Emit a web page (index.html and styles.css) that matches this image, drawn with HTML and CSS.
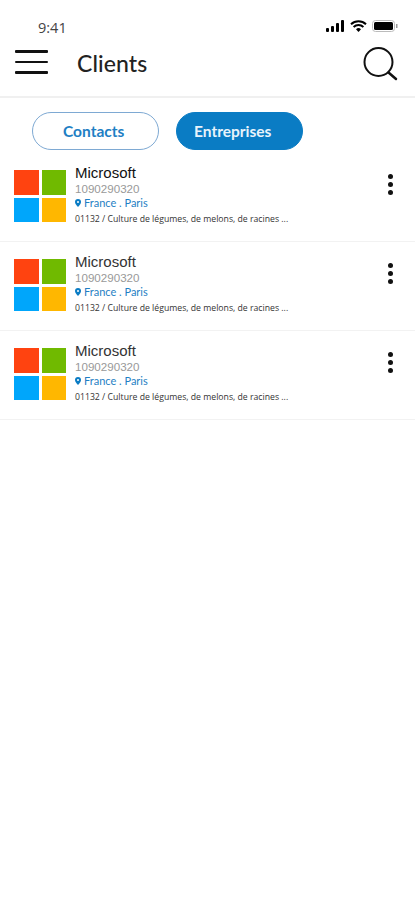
FILE: index.html
```html
<!DOCTYPE html>
<html lang="fr">
<head>
  <meta charset="UTF-8">
  <meta name="viewport" content="width=device-width, initial-scale=1.0">
  <title>Clients</title>
  <link rel="stylesheet" href="styles.css">
</head>
<body>
  <div class="status-bar">
    <span class="time">9:41</span>
    <div class="status-icons">
      <svg width="19" height="12" viewBox="0 0 19 12"><rect x="0" y="8" width="3" height="4" rx="1"/><rect x="5" y="6" width="3" height="6" rx="1"/><rect x="10" y="3" width="3" height="9" rx="1"/><rect x="15" y="0" width="3" height="12" rx="1"/></svg>
      <svg width="17" height="12" viewBox="0 0 17 12"><path d="M1 4.2a11 11 0 0 1 15 0M3.6 6.9a7.2 7.2 0 0 1 9.8 0" fill="none" stroke="#000" stroke-width="2"/><path d="M6 9.2a3.6 3.6 0 0 1 5 0L8.500 12z"/></svg>
      <svg width="26" height="12" viewBox="0 0 26 12"><rect x="0.500" y="0.500" width="22" height="11" rx="3" fill="none" stroke="#bbb"/><rect x="2" y="2" width="19" height="8" rx="1.500"/><rect x="24" y="4" width="1.500" height="4" fill="#999"/></svg>
    </div>
  </div>

  <header class="top-bar">
    <div class="menu-icon"><span></span><span></span><span></span></div>
    <h1>Clients</h1>
    <svg class="search-icon" width="36" height="36" viewBox="0 0 36 36"><circle cx="15.500" cy="15" r="14" fill="none" stroke="#111" stroke-width="2"/><path d="M25.500 25.500L33 32" stroke="#111" stroke-width="2.500" stroke-linecap="round"/></svg>
  </header>

  <div class="tabs">
    <button class="tab">Contacts</button>
    <button class="tab active">Entreprises</button>
  </div>

  <ul class="client-list">
    <li class="client first">
      <div class="logo"><i class="red"></i><i class="green"></i><i class="blue"></i><i class="yellow"></i></div>
      <div class="infos">
        <div class="name">Microsoft</div>
        <div class="code">1090290320</div>
        <div class="place"><svg width="6" height="8" viewBox="0 0 6 8"><path d="M3 0a3 3 0 0 1 3 3c0 2-3 5-3 5S0 5 0 3a3 3 0 0 1 3-3z" fill="#0a7cc4"/><circle cx="3" cy="3" r="1" fill="#fff"/></svg>France . Paris</div>
        <div class="activity">01132 / Culture de légumes, de melons, de racines ...</div>
      </div>
      <div class="dots"><span></span><span></span><span></span></div>
    </li>
    <li class="client">
      <div class="logo"><i class="red"></i><i class="green"></i><i class="blue"></i><i class="yellow"></i></div>
      <div class="infos">
        <div class="name">Microsoft</div>
        <div class="code">1090290320</div>
        <div class="place"><svg width="6" height="8" viewBox="0 0 6 8"><path d="M3 0a3 3 0 0 1 3 3c0 2-3 5-3 5S0 5 0 3a3 3 0 0 1 3-3z" fill="#0a7cc4"/><circle cx="3" cy="3" r="1" fill="#fff"/></svg>France . Paris</div>
        <div class="activity">01132 / Culture de légumes, de melons, de racines ...</div>
      </div>
      <div class="dots"><span></span><span></span><span></span></div>
    </li>
    <li class="client">
      <div class="logo"><i class="red"></i><i class="green"></i><i class="blue"></i><i class="yellow"></i></div>
      <div class="infos">
        <div class="name">Microsoft</div>
        <div class="code">1090290320</div>
        <div class="place"><svg width="6" height="8" viewBox="0 0 6 8"><path d="M3 0a3 3 0 0 1 3 3c0 2-3 5-3 5S0 5 0 3a3 3 0 0 1 3-3z" fill="#0a7cc4"/><circle cx="3" cy="3" r="1" fill="#fff"/></svg>France . Paris</div>
        <div class="activity">01132 / Culture de légumes, de melons, de racines ...</div>
      </div>
      <div class="dots"><span></span><span></span><span></span></div>
    </li>
  </ul>
</body>
</html>
```

FILE: styles.css
```css
* {
  margin: 0;
  padding: 0;
  box-sizing: border-box;
}

body {
  background-color: white;
  font-family: Lato, "Open Sans", sans-serif;
  color: #222;
  min-height: 900px;
}

.status-bar {
  height: 40px;
  padding: 20px 17px 0 38px;
  display: flex;
  justify-content: space-between;
  align-items: flex-start;
}

.time {
  font-family: "Open Sans", sans-serif;
  font-size: 14.500px;
  line-height: 15px;
  color: #444;
}

.status-icons {
  display: flex;
  align-items: center;
  gap: 5px;
}

.status-icons svg {
  display: block;
}

.top-bar {
  height: 58px;
  padding: 0 16px 0 15px;
  display: flex;
  align-items: flex-start;
  border-bottom: 2px solid #f0f0f0;
}

.menu-icon {
  width: 33px;
  margin-top: 10px;
  display: flex;
  flex-direction: column;
  gap: 8px;
}

.menu-icon span {
  height: 2.500px;
  background-color: #111;
  border-radius: 1px;
}

h1 {
  margin: 9px 0 0 29px;
  font-size: 23px;
  line-height: 28px;
  font-weight: 500;
  letter-spacing: 0.1px;
  color: #222;
}

.search-icon {
  margin: 7px 0 0 auto;
}

.tabs {
  display: flex;
  gap: 17px;
  padding: 14px 0 0 32px;
}

.tab {
  width: 127px;
  height: 38px;
  font-family: inherit;
  font-size: 15.500px;
  font-weight: bold;
  text-align: left;
  padding-left: 30px;
  color: #1f7fc4;
  background-color: white;
  border: 1px solid #7ea9d3;
  border-radius: 19px;
}

.tab.active {
  padding-left: 17px;
  color: #e8f3fb;
  background-color: #0a7cc4;
  border-color: #0a7cc4;
}

.client-list {
  list-style: none;
}

.client {
  height: 89px;
  padding: 17px 0 0 14px;
  display: flex;
  align-items: flex-start;
  border-bottom: 1px solid #f2f2f2;
}

.client.first {
  height: 92px;
  padding-top: 20px;
}

.logo {
  width: 52px;
  height: 52px;
  flex-shrink: 0;
  display: grid;
  grid-template-columns: 1fr 1fr;
  gap: 3px;
}

.logo .red { background-color: #ff4310; }
.logo .green { background-color: #70ba00; }
.logo .blue { background-color: #00a6fb; }
.logo .yellow { background-color: #ffb700; }

.infos {
  margin: -6px 0 0 9px;
  width: 290px;
}

.name {
  font-family: "Liberation Sans", sans-serif;
  font-size: 15px;
  line-height: 18px;
  color: #333;
}

.first .name {
  color: #111;
}

.code {
  font-family: "Liberation Sans", sans-serif;
  font-size: 11.600px;
  line-height: 14px;
  color: #999;
}

.place {
  font-size: 11px;
  line-height: 14px;
  color: #1f7fc4;
  display: flex;
  align-items: center;
  gap: 3px;
}

.activity {
  margin-top: 2px;
  font-family: "Open Sans", sans-serif;
  font-size: 8.700px;
  line-height: 14px;
  color: #333;
  white-space: nowrap;
}

.dots {
  margin: 3.500px 0 0 auto;
  padding-right: 22.500px;
  display: flex;
  flex-direction: column;
  gap: 3.400px;
}

.dots span {
  width: 5px;
  height: 5px;
  background-color: #111;
  border-radius: 50%;
}
```
